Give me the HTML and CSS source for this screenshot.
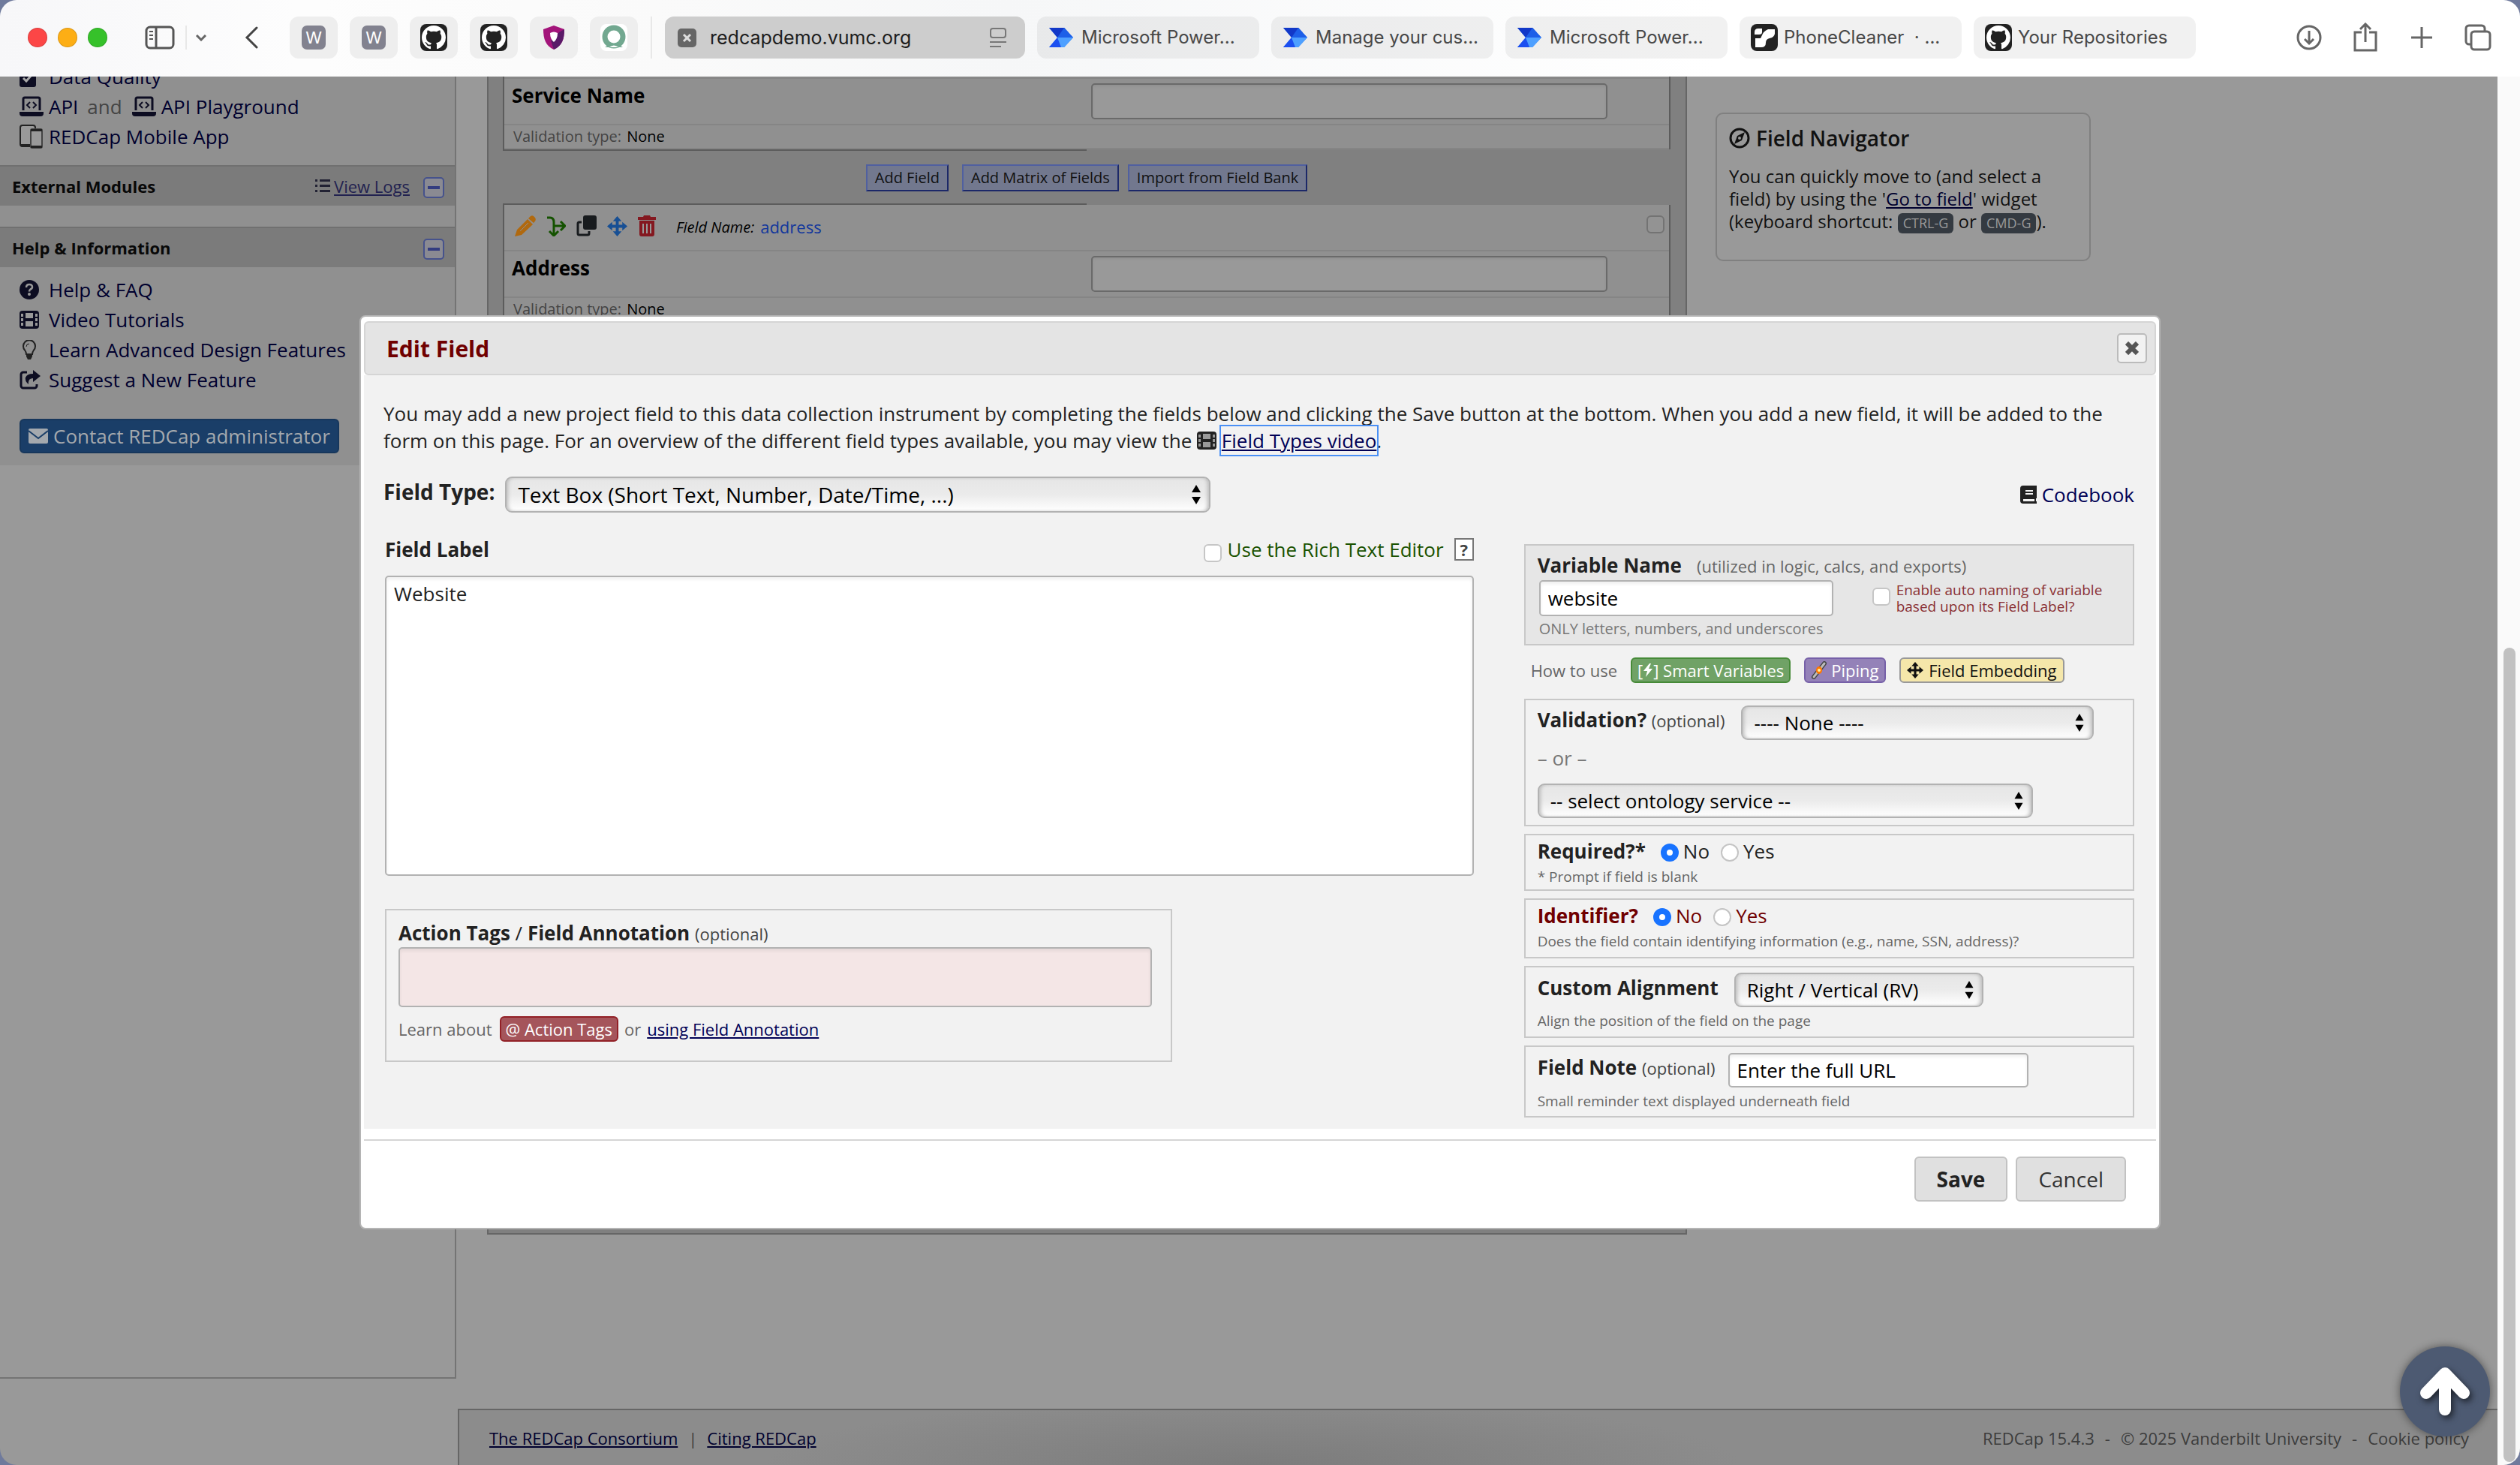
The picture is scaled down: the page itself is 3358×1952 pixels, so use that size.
FILE: index.html
```html
<!DOCTYPE html>
<html lang="en">
<head>
<meta charset="utf-8">
<title>REDCap - Online Designer</title>
<link rel="stylesheet" href="styles.css">
</head>
<body>
<svg class="defs" aria-hidden="true">
  <symbol id="github" viewBox="0 0 36 36"><rect width="36" height="36" rx="8" fill="#222"/><path transform="translate(2 2) scale(2)" fill="#fff" d="M8 0C3.58 0 0 3.58 0 8c0 3.54 2.29 6.53 5.47 7.59.4.07.55-.17.55-.38 0-.19-.01-.82-.01-1.49-2.01.37-2.53-.49-2.69-.94-.09-.23-.48-.94-.82-1.13-.28-.15-.68-.52-.01-.53.63-.01 1.08.58 1.23.82.72 1.21 1.87.87 2.33.66.07-.52.28-.87.51-1.07-1.78-.2-3.64-.89-3.64-3.95 0-.87.31-1.59.82-2.15-.08-.2-.36-1.02.08-2.12 0 0 .67-.21 2.2.82.64-.18 1.32-.27 2-.27.68 0 1.36.09 2 .27 1.53-1.04 2.2-.82 2.2-.82.44 1.1.16 1.92.08 2.12.51.56.82 1.27.82 2.15 0 3.07-1.87 3.75-3.65 3.95.29.25.54.73.54 1.48 0 1.07-.01 1.93-.01 2.2 0 .21.15.46.55.38A8.013 8.013 0 0016 8c0-4.42-3.58-8-8-8z"/></symbol>
  <symbol id="automate" viewBox="0 0 36 36"><path d="M1 5h20l12 13-12 13H1l11-13z" fill="#2f7bf5"/><path d="M1 5h20l6 6.500L12 18z" fill="#1238c8"/><path d="M12 18l9-13 12 13H12z" fill="#1d5fe8"/><path d="M12 18h21L21 31H6z" fill="#4ea0ff"/><path d="M1 31l11-13 5 13z" fill="#1c4ff0"/></symbol>
  <symbol id="laptop" viewBox="0 0 32 28"><path d="M5 19V4a2 2 0 0 1 2-2h18a2 2 0 0 1 2 2v15" fill="none" stroke="currentColor" stroke-width="3"/><path d="M0 21h32v2a4 4 0 0 1-4 4H4a4 4 0 0 1-4-4z" fill="currentColor"/><path d="M14 8l-4 4 4 4M18 8l4 4-4 4" fill="none" stroke="currentColor" stroke-width="2"/></symbol>
  <symbol id="film" viewBox="0 0 26 24"><rect width="26" height="24" rx="4" fill="currentColor"/><g class="film-holes"><rect x="8" y="3" width="10" height="7"/><rect x="8" y="14" width="10" height="7"/><rect x="2" y="4" width="3" height="4"/><rect x="2" y="10" width="3" height="4"/><rect x="2" y="16" width="3" height="4"/><rect x="21" y="4" width="3" height="4"/><rect x="21" y="10" width="3" height="4"/><rect x="21" y="16" width="3" height="4"/></g></symbol>
  <symbol id="arrows" viewBox="0 0 28 28"><path fill="currentColor" d="M14 0l6 7h-4v5h5V8l7 6-7 6v-4h-5v5h4l-6 7-6-7h4v-5H7v4l-7-6 7-6v4h5V7H8z"/></symbol>
  <symbol id="updown" viewBox="0 0 12 26"><path d="M6 0l6 10H0zM0 16h12L6 26z" fill="#000"/></symbol>
</svg>

<header class="toolbar">
  <div class="lights"><i class="red"></i><i class="amber"></i><i class="green"></i></div>
  <button class="tool side" aria-label="Show sidebar"><svg width="40" height="32" viewBox="0 0 40 32" fill="none" stroke="#555" stroke-width="3"><rect x="2" y="2" width="36" height="28" rx="5"/><path d="M15 2v28"/><path d="M6 8h5M6 13h5M6 18h5" stroke-width="2"/></svg></button>
  <button class="tool menu" aria-label="Tab groups"><svg width="16" height="10" viewBox="0 0 16 10" fill="none" stroke="#666" stroke-width="3"><path d="M2 2l6 6 6-6"/></svg></button>
  <button class="tool back" aria-label="Back"><svg width="18" height="30" viewBox="0 0 18 30" fill="none" stroke="#444" stroke-width="3" stroke-linecap="round"><path d="M16 2L3 15l13 13"/></svg></button>
  <nav class="pins" aria-label="Pinned tabs">
    <a href="#"><span class="letter">W</span></a>
    <a href="#"><span class="letter">W</span></a>
    <a href="#" aria-label="GitHub"><svg width="36" height="36"><use href="#github"/></svg></a>
    <a href="#" aria-label="GitHub"><svg width="36" height="36"><use href="#github"/></svg></a>
    <a href="#" aria-label="Security"><svg width="28" height="32" viewBox="0 0 28 32"><path d="M14 0l14 5c0 13-3 22-14 27C3 27 0 18 0 5z" fill="#a3147a"/><path d="M28 5c0 13-3 22-14 27l-4-12 11-11z" fill="#5a1a68"/><path d="M9 10q5-3 10 0 0 8-5 12-5-4-5-12z" fill="#fff"/></svg></a>
    <a href="#" aria-label="Assistant"><svg width="36" height="36" viewBox="0 0 36 36"><rect width="36" height="36" rx="8" fill="#fff"/><circle cx="18" cy="17" r="12" fill="none" stroke="#72a890" stroke-width="7"/><path d="M6 31q12-8 24 0z" fill="#72a890"/><path d="M12 31q6-5 12 0z" fill="#fff"/></svg></a>
  </nav>
  <div class="address"><svg width="25" height="25" viewBox="0 0 25 25"><rect width="25" height="25" rx="5" fill="#666"/><path d="M8 8l9 9M17 8l-9 9" stroke="#ddd" stroke-width="3"/></svg><span>redcapdemo.vumc.org</span><svg class="reader" width="24" height="26" viewBox="0 0 24 26" fill="none" stroke="#777" stroke-width="2"><rect x="2" y="1" width="20" height="12" rx="3"/><path d="M1 19h22M1 25h15"/></svg></div>
  <nav class="tabs" aria-label="Tabs">
    <a href="#"><svg width="36" height="36"><use href="#automate"/></svg>Microsoft Power...</a>
    <a href="#"><svg width="36" height="36"><use href="#automate"/></svg>Manage your cus...</a>
    <a href="#"><svg width="36" height="36"><use href="#automate"/></svg>Microsoft Power...</a>
    <a href="#"><svg width="36" height="36" viewBox="0 0 36 36"><rect width="36" height="36" rx="8" fill="#222"/><path d="M5 14v-3q0-5 5-5h5v5q0 3-4 3zM14 17q3-8 9-10h9v6q-1 5-7 6-5 1-5 6 0 6-6 6H6V19h5q3 0 3-2z" fill="#fff"/></svg>PhoneCleaner &nbsp;· ...</a>
    <a href="#"><svg width="36" height="36"><use href="#github"/></svg>Your Repositories</a>
  </nav>
  <div class="actions">
    <button class="tool" aria-label="Downloads"><svg width="36" height="36" viewBox="0 0 36 36" fill="none" stroke="#666" stroke-width="3"><circle cx="18" cy="18" r="15"/><path d="M18 9v17M12 20l6 6 6-6"/></svg></button>
    <button class="tool" aria-label="Share"><svg width="36" height="40" viewBox="0 0 36 40" fill="none" stroke="#666" stroke-width="3"><path d="M13 13H4v24h28V13h-9"/><path d="M18 26V3M11 9l7-7 7 7"/></svg></button>
    <button class="tool" aria-label="New tab"><svg width="36" height="36" viewBox="0 0 36 36" stroke="#666" stroke-width="3"><path d="M18 4v28M4 18h28"/></svg></button>
    <button class="tool" aria-label="Tab overview"><svg width="36" height="36" viewBox="0 0 36 36" fill="none" stroke="#666" stroke-width="3"><rect x="9" y="10" width="25" height="24" rx="4"/><path d="M9 27H6a4 4 0 0 1-4-4V6a4 4 0 0 1 4-4h17a4 4 0 0 1 4 4v4"/></svg></button>
  </div>
</header>

<div class="window">
  <div class="page">
    <aside class="sidebar">
      <ul class="links first">
        <li><span class="ico"><svg width="22" height="28" viewBox="0 0 22 28"><path d="M3 3h16a3 3 0 0 1 3 3v19a3 3 0 0 1-3 3H3a3 3 0 0 1-3-3V6a3 3 0 0 1 3-3z" fill="currentColor"/><path d="M5 16l4 4 8-9" fill="none" stroke="#aaa" stroke-width="3"/></svg></span><a href="#">Data Quality</a></li>
        <li><span class="ico"><svg width="32" height="28"><use href="#laptop"/></svg></span><a href="#">API</a><span class="and">and</span><svg width="32" height="28"><use href="#laptop"/></svg><a href="#" class="near">API Playground</a></li>
        <li><span class="ico"><svg width="32" height="32" viewBox="0 0 32 32"><rect x="1" y="1" width="20" height="28" rx="3" fill="#999" stroke="#222" stroke-width="2"/><path d="M1 26h14v4H3z" fill="#222"/><rect x="15" y="6" width="15" height="25" rx="2" fill="#999" stroke="#444" stroke-width="2"/><path d="M15 28h15v3H15zM15 6h15v3H15z" fill="#222"/></svg></span><a href="#">REDCap Mobile App</a></li>
      </ul>
      <div class="bar"><h2>External Modules</h2><svg width="20" height="18" viewBox="0 0 20 18" fill="#223"><path d="M0 0h3v3H0zM6 0h14v3H6zM0 7h3v3H0zM6 7h14v3H6zM0 14h3v3H0zM6 14h14v3H6z"/></svg><a href="#">View Logs</a><button class="fold" aria-label="Collapse External Modules"></button></div>
      <div class="bar second"><h2>Help &amp; Information</h2><button class="fold" aria-label="Collapse Help"></button></div>
      <ul class="links">
        <li><span class="ico"><svg width="26" height="26" viewBox="0 0 26 26"><circle cx="13" cy="13" r="13" fill="currentColor"/><path d="M9 10q0-4 4-4t4 3.500q0 2-2.500 3-1.500 1-1.500 3" fill="none" stroke="#999" stroke-width="2.500"/><circle cx="13" cy="19" r="2" fill="#999"/></svg></span><a href="#">Help &amp; FAQ</a></li>
        <li><span class="ico"><svg width="26" height="24"><use href="#film"/></svg></span><a href="#">Video Tutorials</a></li>
        <li><span class="ico bulb"><svg width="18" height="26" viewBox="0 0 18 26"><path d="M5 19q0-3-2-5.500A8 8 0 1 1 15 13.500Q13 16 13 19z" fill="none" stroke="#222" stroke-width="2"/><path d="M5 20h8v2l-2 4H7l-2-4z" fill="#222"/><path d="M5 9q0-4 4-4" fill="none" stroke="#222"/></svg></span><a href="#">Learn Advanced Design Features</a></li>
        <li><span class="ico"><svg width="28" height="26" viewBox="0 0 28 26"><path d="M10 3H5a3 3 0 0 0-3 3v15a3 3 0 0 0 3 3h15a3 3 0 0 0 3-3v-2" fill="none" stroke="currentColor" stroke-width="3"/><path d="M18 0l10 8-10 8v-5q-7 0-6 8-5-4-4-9 2-5 10-5z" fill="currentColor"/></svg></span><a href="#">Suggest a New Feature</a></li>
      </ul>
      <button class="contact"><svg width="26" height="20" viewBox="0 0 26 20"><rect width="26" height="20" rx="2" fill="#a4a9ae"/><path d="M0 3l13 10L26 3" fill="none" stroke="#1a3e68" stroke-width="2"/></svg>Contact REDCap administrator</button>
    </aside>

    <div class="content">
      <div class="workspace">
        <main class="designer">
          <section class="field cut">
            <div class="row entry"><label for="svc">Service Name</label><input id="svc" type="text"></div>
            <p class="row vtype">Validation type: <b>None</b></p>
          </section>
          <div class="rule"></div>
          <div class="adders"><button class="lead">Add Field</button><button>Add Matrix of Fields</button><button>Import from Field Bank</button></div>
          <div class="rule"></div>
          <section class="field">
            <div class="row tools">
              <svg width="28" height="28" viewBox="0 0 28 28" fill="#b0690f"><path d="M17 5l7 7L9 26l-9 2 3-9zM19 3q3-4 6-2l2 2q2 3-1 6l-1 1-7-6z"/><path d="M7 21L18 10" stroke="#8f8f8f" stroke-width="1"/></svg>
              <svg width="26" height="28" viewBox="0 0 26 28" fill="none" stroke="#145200" stroke-width="3"><path d="M1 3h4q5 0 5 6v17M4 21l6 6 6-6M10 14h14M19 8l6 6-6 6"/></svg>
              <svg width="27" height="28" viewBox="0 0 27 28"><rect x="9" y="0" width="18" height="19" rx="3" fill="#181b1e"/><path d="M7 9H4a2 2 0 0 0-2 2v13a2 2 0 0 0 2 2h11a2 2 0 0 0 2-2v-3" fill="none" stroke="#181b1e" stroke-width="3"/></svg>
              <svg class="blue" width="27" height="27"><use href="#arrows"/></svg>
              <svg width="24" height="28" viewBox="0 0 24 28" fill="#841820"><path d="M0 2h7l1-2h8l1 2h7v4H0zM2 7h20v18a3 3 0 0 1-3 3H5a3 3 0 0 1-3-3z"/><path d="M7 11v13M12 11v13M17 11v13" stroke="#999" stroke-width="2"/></svg>
              <em>Field Name:</em><span class="name">address</span>
              <input type="checkbox" class="dim" aria-label="Select address">
            </div>
            <div class="row entry"><label for="adr">Address</label><input id="adr" type="text"></div>
            <p class="row vtype">Validation type: <b>None</b></p>
          </section>
        </main>
        <section class="navigator">
          <h2><svg width="28" height="28" viewBox="0 0 28 28"><circle cx="14" cy="14" r="12" fill="none" stroke="currentColor" stroke-width="3"/><path d="M21 6l-4 11-10 5 4-11z" fill="currentColor"/><circle cx="14" cy="14" r="2" fill="#999"/></svg>Field Navigator</h2>
          <p>You can quickly move to (and select a field) by using the '<a href="#">Go to field</a>' widget (keyboard shortcut: <kbd>CTRL-G</kbd> or <kbd>CMD-G</kbd>).</p>
        </section>
      </div>
      <footer class="footer">
        <div><a href="#">The REDCap Consortium</a><span class="bar-sep">|</span><a href="#">Citing REDCap</a></div>
        <div class="legal"><span>REDCap 15.4.3</span><span>-</span><span>© 2025 Vanderbilt University</span><span>-</span><span>Cookie policy</span></div>
      </footer>
    </div>
  </div>
  <div class="track"><div class="thumb"></div></div>
</div>

<button class="top" aria-label="Back to top"><svg width="68" height="66" viewBox="0 0 68 66" fill="none" stroke="#fff" stroke-width="16" stroke-linecap="round" stroke-linejoin="round"><path d="M9 35L34 9l25 26M34 12v45"/></svg></button>

<div class="dialog" role="dialog" aria-labelledby="dlg">
  <div class="dialog-head"><h1 id="dlg">Edit Field</h1><button class="close" aria-label="Close"><svg width="18" height="18" viewBox="0 0 18 18" stroke="#555" stroke-width="6"><path d="M2 2l14 14M16 2L2 16"/></svg></button></div>
  <form class="dialog-body">
    <p class="intro">You may add a new project field to this data collection instrument by completing the fields below and clicking the Save button at the bottom. When you add a new field, it will be added to the form on this page. For an overview of the different field types available, you may view the <svg class="light" width="26" height="24"><use href="#film"/></svg> <a href="#" class="focused">Field Types video</a>.</p>
    <div class="type-row">
      <label for="ftype">Field Type:</label>
      <span class="select wide"><select id="ftype"><option>Text Box (Short Text, Number, Date/Time, ...)</option></select><svg width="12" height="26"><use href="#updown"/></svg></span>
      <a href="#" class="codebook"><svg width="22" height="24" viewBox="0 0 22 24"><path d="M4 0h18v17h-1v4h1v3H4a4 4 0 0 1-4-4V4a4 4 0 0 1 4-4z" fill="#222"/><path d="M7 7h10M7 11h10" stroke="#f2f2f2" stroke-width="2"/><path d="M4 18h15v3H4z" fill="#f2f2f2"/></svg>Codebook</a>
    </div>
    <div class="columns">
      <div class="left">
        <div class="label-row"><label class="strong" for="flabel">Field Label</label><label class="rich"><input type="checkbox">Use the Rich Text Editor</label><button type="button" class="help">?</button></div>
        <textarea id="flabel" class="label-text">Website</textarea>
        <section class="box annotation">
          <label for="tags"><b>Action Tags</b> / <b>Field Annotation</b> <small>(optional)</small></label>
          <textarea id="tags"></textarea>
          <div class="learn"><span>Learn about</span><button type="button" class="badge red-badge">@ Action Tags</button><span>or</span><a href="#">using Field Annotation</a></div>
        </section>
      </div>
      <div class="right">
        <section class="box variable">
          <label class="heading" for="var"><b>Variable Name</b><span>(utilized in logic, calcs, and exports)</span></label>
          <div class="var-row"><input id="var" type="text" value="website"><label class="auto"><input type="checkbox"><span>Enable auto naming of variable<br>based upon its Field Label?</span></label></div>
          <p class="only">ONLY letters, numbers, and underscores</p>
        </section>
        <div class="howto"><span>How to use</span>
          <button type="button" class="badge green-badge">[<svg width="14" height="18" viewBox="0 0 12 18"><path d="M8 0L0 10h5L3 18l9-11H7l3-7z" fill="#fff"/></svg>] Smart Variables</button>
          <button type="button" class="badge purple-badge"><svg width="22" height="24" viewBox="0 0 22 24"><path d="M4 21L18 3" stroke="#444" stroke-width="6" stroke-linecap="round"/><path d="M4 21L18 3" stroke="#bbb" stroke-width="3" stroke-linecap="round"/><ellipse cx="11" cy="12" rx="4" ry="5" fill="#f70"/><circle cx="11" cy="12" r="2" fill="#fff3a0"/></svg>Piping</button>
          <button type="button" class="badge yellow-badge"><svg width="22" height="22"><use href="#arrows"/></svg> Field Embedding</button>
        </div>
        <section class="box validation">
          <div class="line"><label for="val"><b>Validation?</b> <small>(optional)</small></label><span class="select"><select id="val"><option>---- None ----</option></select><svg width="12" height="24"><use href="#updown"/></svg></span></div>
          <p class="or">– or –</p>
          <span class="select onto"><select aria-label="Ontology service"><option>-- select ontology service --</option></select><svg width="12" height="24"><use href="#updown"/></svg></span>
        </section>
        <fieldset class="box radios">
          <div class="line"><b>Required?*</b><label><input type="radio" name="req" checked>No</label><label><input type="radio" name="req">Yes</label></div>
          <p class="hint">* Prompt if field is blank</p>
        </fieldset>
        <fieldset class="box radios identifier">
          <div class="line"><b>Identifier?</b><label><input type="radio" name="idn" checked>No</label><label><input type="radio" name="idn">Yes</label></div>
          <p class="hint">Does the field contain identifying information (e.g., name, SSN, address)?</p>
        </fieldset>
        <section class="box align">
          <div class="line"><label for="aln"><b>Custom Alignment</b></label><span class="select"><select id="aln"><option>Right / Vertical (RV)</option></select><svg width="12" height="24"><use href="#updown"/></svg></span></div>
          <p class="hint">Align the position of the field on the page</p>
        </section>
        <section class="box note">
          <div class="line"><label for="nte"><b>Field Note</b> <small>(optional)</small></label><input id="nte" type="text" value="Enter the full URL"></div>
          <p class="hint">Small reminder text displayed underneath field</p>
        </section>
      </div>
    </div>
  </form>
  <div class="dialog-foot"><button class="save">Save</button><button>Cancel</button></div>
</div>
</body>
</html>
```
FILE: styles.css
```css
* { box-sizing: border-box; }
body { margin: 0; min-height: 100vh; display: flex; flex-direction: column; background: #6f7a9c; font: 26px/36px "Open Sans", sans-serif; color: #222; overflow: hidden; }
h1, h2, p, ul, fieldset { margin: 0; padding: 0; }
ul { list-style: none; }
svg { flex: none; display: block; }
button, input, select, textarea { font: inherit; color: inherit; margin: 0; }
a { color: #000055; }
.defs { position: absolute; width: 0; height: 0; }

/* Browser toolbar */
.toolbar { flex: none; height: 102px; display: flex; align-items: center; padding: 0 38px 2px 37px; background: linear-gradient(90deg, #f7f7f9, #fdfdfd 12%, #fafafa 26%, #f6f7f8 40%, #fff 68%); border-radius: 22px 22px 0 0; font-family: Inter, sans-serif; }
.tool { border: 0; padding: 0; background: none; }
.lights { display: flex; gap: 14px; }
.lights i { width: 26px; height: 26px; border-radius: 50%; border: 1px solid #0002; }
.red { background: #fc4646; }
.amber { background: #fdae15; }
.green { background: #36c12a; }
.side { margin-left: 50px; padding-right: 14px; border-right: 2px solid #e8e8e8; }
.menu { margin-left: 11px; }
.back { margin-left: 50px; }
.pins { display: flex; gap: 16px; margin-left: 42px; padding-right: 17px; border-right: 2px solid #e8e8e8; }
.pins a { width: 64px; height: 56px; border-radius: 12px; background: #eee; display: flex; align-items: center; justify-content: center; text-decoration: none; }
.letter { width: 32px; height: 32px; border-radius: 7px; background: #82828f; color: #fff; font-size: 22px; line-height: 32px; text-align: center; }
.address { width: 480px; height: 56px; margin-left: 17px; padding: 0 24px 0 17px; border-radius: 12px; background: #cdcdcd; display: flex; align-items: center; gap: 18px; font-size: 25px; color: #1d1d1d; }
.reader { margin-left: auto; }
.tabs { display: flex; gap: 16px; margin-left: 16px; }
.tabs a { width: 296px; height: 56px; padding-left: 15px; border-radius: 12px; background: #0000000e; display: flex; align-items: center; gap: 8px; font-size: 24px; color: #484848; text-decoration: none; white-space: nowrap; }
.actions { margin-left: auto; display: flex; align-items: center; gap: 39px; }

/* Page behind the dialog */
.window { flex: 1; min-height: 0; display: flex; border-radius: 0 0 22px 22px; overflow: hidden; background: #999; }
.page { flex: 1; display: flex; }
.sidebar { width: 608px; height: 1735px; flex: none; border: solid #747474; border-width: 0 2px 2px 0; background: linear-gradient(#909090 518px, #999 518px); }
.links { padding: 10px 0 0 26px; color: #0d0d22; }
.links.first { padding-top: 0; margin-top: -20px; height: 138px; }
.links li { height: 40px; display: flex; align-items: center; }
.links a { color: #00002e; text-decoration: none; }
.ico { width: 39px; flex: none; }
.ico.bulb { padding-left: 4px; }
.and { color: #444; margin: 0 13px 0 12px; }
.links .near { margin-left: 7px; }
.film-holes { fill: #999; }
.bar { height: 54px; padding: 0 14px 0 16px; border-top: 2px solid #707070; background: #7b7b7b; display: flex; align-items: center; font-size: 22px; line-height: 34px; }
.bar.second { margin-top: 28px; }
.bar h2 { flex: 1; font-size: 22px; color: #080808; }
.bar a { margin: 0 18px 0 5px; color: #222250; }
.fold { width: 28px; height: 28px; padding: 0; border: 2px solid #46528c; border-radius: 5px; background: linear-gradient(#333c80, #333c80) center / 16px 4px no-repeat, #8a8a92; margin-top: 3px; }
.contact { margin: 32px 0 0 26px; height: 46px; padding: 0 10px; border: 2px solid #17375c; border-radius: 6px; background: #1a3e68; color: #a4a9ae; display: flex; align-items: center; gap: 7px; }

.content { flex: 1; display: flex; flex-direction: column; margin-left: 2px; min-width: 0; }
.workspace { display: flex; align-items: flex-start; gap: 38px; padding-left: 39px; }
.designer { width: 1599px; height: 1543px; padding: 0 20px 0 19px; border: solid #666; border-width: 0 2px 2px; background: #808080; }
.field { border: solid #5c5c5c; border-width: 0 2px; background: #909090; }
.field.cut { padding-top: 1px; }
.row { border-bottom: 2px solid #858585; }
.cut .entry { border-top: 2px solid #858585; }
.entry { height: 62px; display: flex; padding: 6px 82px 0 10px; }
.cut .entry { height: 64px; }
.entry label { flex: 1; font-weight: 700; line-height: 32px; color: #000; }
.entry input { width: 688px; height: 48px; border: 2px solid #6a6a6a; border-radius: 5px; background: #999; box-shadow: inset 0 2px 3px #8888; }
.vtype { height: 32px; padding-left: 12px; font-size: 20px; line-height: 30px; color: #444; }
.vtype b { font-weight: 400; color: #000; margin-left: 2px; }
.rule { width: 50%; height: 2px; background: #5c5c5c; }
.adders { display: flex; justify-content: center; gap: 12px; padding: 18px 0 16px; }
.adders button { height: 36px; padding: 0 10px; border: 2px solid; border-color: #5060a0 #1c2868 #1c2868 #5060a0; background: #72788e; font-size: 20px; line-height: 30px; color: #111; }
.adders .lead { margin-right: 6px; }
.tools { height: 62px; padding: 0 6px 4px 14px; display: flex; align-items: center; gap: 14px; font-size: 22px; }
.tools em { font-size: 20px; color: #000; margin: 3px -6px 0 13px; }
.name { color: #12379c; margin-top: 2px; }
.blue { color: #174f94; }
input[type=checkbox] { appearance: none; flex: none; width: 24px; height: 24px; border: 2px solid #c6c6c6; border-radius: 6px; background: #fff; }
input[type=checkbox].dim { margin: 0 0 4px auto; background: #939393; border-color: #737373; }

.navigator { width: 500px; margin-top: 48px; height: 198px; padding: 14px 16px; border: 2px solid #808080; border-radius: 10px; font-size: 24px; line-height: 30px; color: #111; }
.navigator h2 { display: flex; align-items: center; gap: 8px; font-size: 28px; font-weight: 600; line-height: 36px; margin-bottom: 18px; }
.navigator a { color: #00002e; }
kbd { font: 18px/26px "Open Sans", sans-serif; display: inline-block; vertical-align: top; margin-top: 4px; height: 27px; padding: 0 7px; border-radius: 6px; background: #343a41; color: #999; }

.footer { margin-top: auto; height: 75px; padding: 0 38px 0 40px; border: solid #666; border-width: 2px 0 0 2px; background: radial-gradient(ellipse 650px 90px at 39% 100%, #7c7c7c, #8c8c8c); display: flex; justify-content: space-between; align-items: center; font-size: 22px; color: #3c3c3c; }
.footer a { color: #00002e; }
.bar-sep { margin: 0 13px 0 14px; }
.legal { display: flex; gap: 14px; }
.track { width: 30px; background: #fafafa; display: flex; flex-direction: column; justify-content: flex-end; padding: 0 6px 4px 8px; }
.thumb { height: 1085px; border-radius: 8px; background: #c1c1c1; }
.top { position: fixed; right: 40px; bottom: 38px; width: 120px; height: 120px; border: 0; border-radius: 50%; background: #4d5a72; display: flex; align-items: center; justify-content: center; box-shadow: 0 0 12px #0007; }
.top svg { filter: drop-shadow(3px 4px 4px #0009); }

/* Dialog */
.dialog { position: fixed; top: 420px; left: 0; right: 0; margin: 0 auto; width: 2400px; max-width: 96%; padding: 6px 4px 4px; border: 2px solid #b4b4b4; border-radius: 8px; background: #fff; }
.dialog-head { height: 72px; padding: 0 10px 0 28px; border: 2px solid #d5d5d5; border-radius: 6px; background: #e4e4e4; display: flex; align-items: center; justify-content: space-between; }
h1 { font-size: 30px; line-height: 34px; padding-top: 2px; color: #700000; }
.close { width: 40px; height: 40px; padding: 0; border: 2px solid #bbb; border-radius: 5px; background: #f2f2f2; display: flex; align-items: center; justify-content: center; }
.dialog-body { padding: 33px 29px 15px 26px; background: #f2f2f2; }
.light { display: inline-block; vertical-align: -2px; }
.intro .film-holes { fill: #f2f2f2; }
.focused { outline: 2px solid #4a90f5; outline-offset: 1px; }
.type-row { display: flex; align-items: center; margin-top: 30px; }
.type-row label { font-size: 28px; font-weight: 700; padding-bottom: 8px; margin-right: 14px; }
.codebook { margin-left: auto; display: flex; align-items: center; gap: 7px; text-decoration: none; }
.select { display: grid; align-items: center; }
.select select, .select svg { grid-area: 1 / 1; }
.select svg { justify-self: end; margin-right: 13px; pointer-events: none; }
select { appearance: none; width: 100%; height: 46px; padding: 0 36px 0 15px; border: 2px solid #b2b2b2; border-radius: 9px; background: linear-gradient(#e6e6e6, #ebebeb 50%, #fff); color: #000; box-shadow: inset 4px 0 5px -2px #bbb, inset -4px 0 5px -2px #bbb; }
.wide { width: 940px; }
.wide select { height: 48px; font-size: 28px; }
.columns { display: grid; grid-template-columns: 1450fr 813fr; gap: 67px; margin: 30px 0 0 2px; }
.label-row { height: 38px; display: flex; align-items: center; margin-bottom: 16px; }
.strong { font-weight: 700; flex: 1; }
.rich { display: flex; align-items: center; gap: 8px; color: #1a5200; }
.rich input { margin-top: 10px; }
.help { width: 26px; height: 30px; margin-left: 14px; padding: 0; border: 2px solid #777; background: #fff; font-size: 22px; font-weight: 700; line-height: 24px; color: #444; }
textarea { display: block; width: 100%; resize: none; border: 2px solid #b2b2b2; border-radius: 5px; background: #fff; padding: 4px 10px; line-height: 36px; box-shadow: inset 0 3px 4px #0001; }
.label-text { height: 400px; }
.box { border: 2px solid #c8c8c8; padding: 8px 16px; min-width: 0; }
.box small, .heading span { font-size: 22px; color: #444; }
.annotation { width: 1049px; margin-top: 44px; padding: 12px 25px 24px 16px; }
.annotation textarea { height: 80px; background: #f4e6e6; }
.learn { display: flex; align-items: center; height: 36px; margin-top: 11px; font-size: 22px; color: #666; gap: 8px; }
.badge { height: 34px; padding: 0 7px; border: 2px solid; border-radius: 6px; font-size: 22px; line-height: 28px; color: #fff; display: flex; align-items: center; white-space: pre; }
.red-badge { padding: 0 6px; background: #a5555b; border-color: #922026; margin-left: 2px; }
.green-badge { background: #70a266; border-color: #468a38; }
.purple-badge { background: #9482b8; border-color: #7660a8; gap: 5px; }
.yellow-badge { background: #f5e7aa; border-color: #999; color: #111; padding: 0 8px; }
.yellow-badge svg { margin-right: 2px; }
.right { padding-top: 12px; display: flex; flex-direction: column; gap: 10px; min-width: 0; }
.variable { background: #e6e6e6; padding-bottom: 6px; }
.heading { display: flex; align-items: baseline; gap: 20px; }
.heading span { color: #666; }
input[type=text] { padding: 0 10px; color: #000; }
.var-row input[type=text], .note input { height: 48px; width: 392px; border: 2px solid #b2b2b2; border-radius: 5px; background: #fff; box-shadow: inset 0 3px 4px #0001; }
.var-row { display: flex; align-items: center; gap: 52px; margin: 1px 0 3px 2px; }
.auto { display: flex; align-items: center; gap: 8px; font-size: 19px; line-height: 22px; color: #8a3034; }
.auto input { margin-bottom: 4px; }
.only { padding-left: 2px; font-size: 20px; line-height: 28px; color: #777; }
.howto { height: 36px; margin: 5px 0 10px; padding-left: 9px; display: flex; align-items: center; gap: 18px; font-size: 22px; color: #666; }
.line { display: flex; align-items: center; }
.line > label { padding-bottom: 7px; }
.validation { padding: 7px 16px 9px; }
.validation .select { width: 470px; margin-left: 22px; }
.or { margin: 6px 0 16px; color: #777; }
.validation .onto { width: 660px; margin-left: 0; }
.hint { font-size: 19px; line-height: 32px; color: #666; white-space: nowrap; }
.radios { padding: 3px 16px 1px; }
.radios b { margin-right: 20px; }
.radios .line label { display: flex; align-items: center; gap: 6px; padding: 0; margin-right: 15px; }
.identifier { padding-bottom: 5px; }
.identifier .line { color: #700000; }
input[type=radio] { appearance: none; width: 24px; height: 24px; border: 2px solid #c4c4c4; border-radius: 50%; background: #fff; margin-top: 3px; }
input[type=radio]:checked { border: 8px solid #1873ff; }
.align { padding: 7px 16px 5px; }
.note { padding-bottom: 4px; }
.align .hint, .note .hint { margin-top: 2px; }
.align .select { width: 332px; margin-left: 21px; }
.note input { width: 400px; height: 46px; margin-left: 17px; }
.dialog-foot { margin-top: 14px; padding: 21px 40px 31px; border-top: 2px solid #d5d5d5; display: flex; justify-content: flex-end; gap: 11px; }
.dialog-foot button { height: 60px; padding: 0 28px; border: 2px solid #c2c2c2; border-radius: 6px; background: #e0e0e0; font-size: 28px; line-height: 54px; color: #333; }
.dialog-foot .save { font-weight: 700; color: #222; }
```
